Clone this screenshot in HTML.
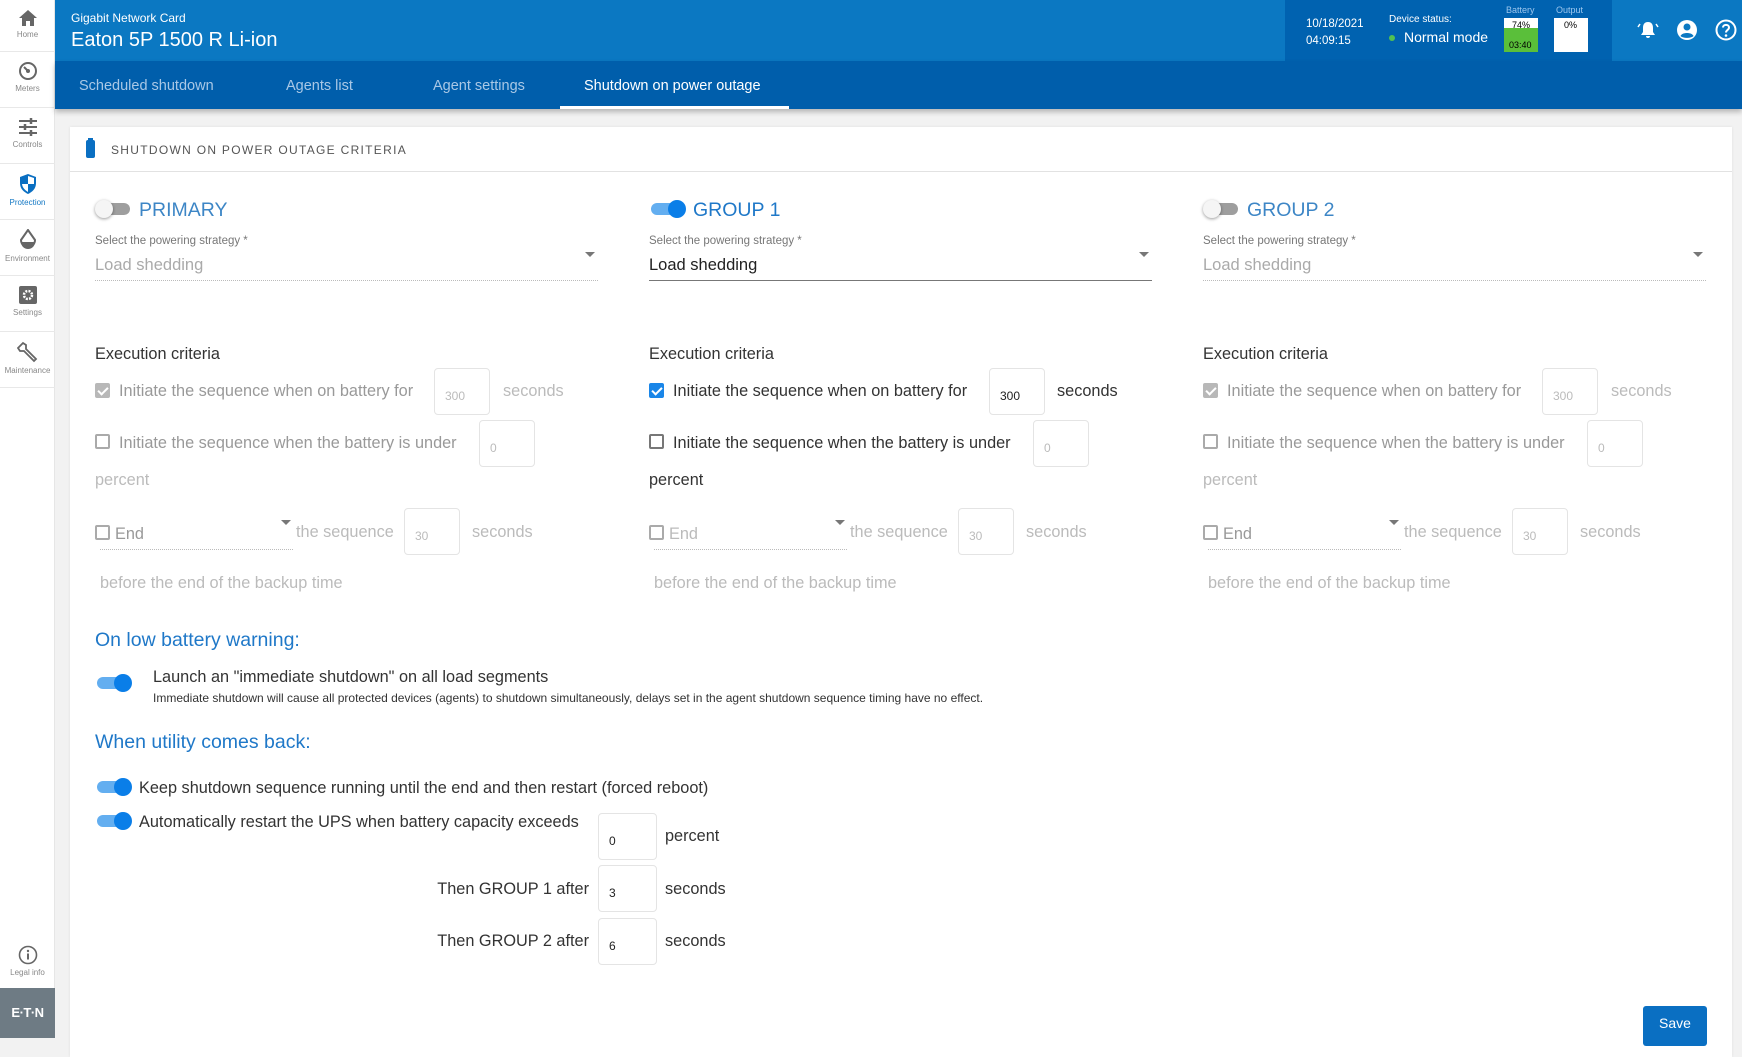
<!DOCTYPE html>
<html><head><meta charset="utf-8">
<style>
*{box-sizing:border-box;margin:0;padding:0}
body{width:1742px;height:1038px;overflow:hidden;background:#f2f2f2;font-family:"Liberation Sans",sans-serif;color:#333;position:relative}
.a{position:absolute;white-space:nowrap;margin-top:2px}
#side{position:absolute;left:0;top:0;width:55px;height:1038px;background:#fff;border-right:1px solid #e6e6e6}
.si{position:absolute;left:0;width:55px;height:56px;border-bottom:1px solid #e8e8e8;text-align:center;font-size:8px;color:#888}
.si svg{display:block;margin:9px auto 3px}
#hdr{position:absolute;left:55px;top:0;width:1687px;height:61px;background:#0b78c2}
#tabs{position:absolute;left:55px;top:61px;width:1687px;height:48px;background:#005eab;box-shadow:0 3px 5px rgba(0,0,0,.25)}
.tab{position:absolute;top:17px;font-size:14.5px;color:#a9c8e6}
#card{position:absolute;left:70px;top:127px;width:1662px;height:930px;background:#fff;box-shadow:0 0 3px rgba(0,0,0,.08)}
.col{position:absolute;top:0;width:510px;height:620px}
.tg{position:absolute;width:37px;height:18px}
.tg .tr{position:absolute;left:2px;top:3px;width:33px;height:12px;border-radius:6px;background:#9e9e9e}
.tg .kn{position:absolute;left:0;top:0;width:18px;height:18px;border-radius:50%;background:#f5f5f5;box-shadow:0 1px 3px rgba(0,0,0,.4)}
.tg.on .tr{background:#63aef0}
.tg.on .kn{left:19px;background:#0a7ee8;box-shadow:none}
.gt{font-size:19.5px;color:#1f78c8}
.dis .gt{color:#3d86c6}
.lbl{font-size:11.5px;color:#777}
.val{font-size:16.5px;color:#222}
.dis .val{color:#aaa}
.ul{position:absolute;height:0;border-bottom:1px solid #777}
.dis .ul{border-bottom:1px dotted #bbb}
.arr{position:absolute;width:0;height:0;border-left:5px solid transparent;border-right:5px solid transparent;border-top:5px solid #777}
.txt{font-size:16.3px;color:#333}
.dis .txt{color:#999}
.gray{color:#bbb!important}
.cb{position:absolute;width:15px;height:15px;border:2px solid #777;border-radius:2px;background:#fff}
.dis .cb{border-color:#aaa}
.cb.ck{background:#1a86e8;border-color:#1a86e8}
.dis .cb.ck{background:#b8b8b8;border-color:#b8b8b8}
.cb.ck::after{content:"";position:absolute;left:3px;top:0px;width:4px;height:8px;border-right:2px solid #fff;border-bottom:2px solid #fff;transform:rotate(45deg)}
.in{position:absolute;width:56px;height:47px;border:1px solid #e4e4e4;border-radius:4px;font-size:12px;color:#222;padding:20px 0 0 10px}
.dis .in{color:#bbb}
.h2{font-size:19.5px;color:#1f78c8}
.t16{font-size:16.3px;color:#333}
</style></head><body>

<div id="side">
 <div class="si" style="top:0;height:52px"><svg width="20" height="18" viewBox="0 0 20 18"><path d="M10 1 L1 9 H4 V17 H8 V12 H12 V17 H16 V9 H19 Z" fill="#666"/></svg>Home</div>
 <div class="si" style="top:52px"><svg width="20" height="20" viewBox="0 0 20 20"><circle cx="10" cy="10" r="8" fill="none" stroke="#666" stroke-width="2"/><path d="M10 10 L6 6" stroke="#666" stroke-width="2"/><circle cx="10" cy="10" r="2" fill="#666"/></svg>Meters</div>
 <div class="si" style="top:108px"><svg width="20" height="20" viewBox="0 0 20 20" stroke="#666" stroke-width="2"><path d="M1 4H19M1 10H19M1 16H19"/><path d="M13 1V7M7 7V13M13 13V19" stroke-width="2.5"/></svg>Controls</div>
 <div class="si" style="top:164px;color:#1478c4"><svg width="20" height="22" viewBox="0 0 20 22"><path d="M10 1 L18 4 V10 C18 16 14 19 10 21 C6 19 2 16 2 10 V4 Z" fill="#0a6fc2"/><path d="M10 3 V11 H16 V5 Z M4 11 H10 V19 C7 17 4.5 15 4 11Z" fill="#fff"/></svg>Protection</div>
 <div class="si" style="top:220px"><svg width="20" height="22" viewBox="0 0 20 22"><path d="M10 1 L3 11 A7 7 0 1 0 17 11 Z" fill="none" stroke="#666" stroke-width="2"/><path d="M3 13 A7 7 0 0 0 17 13Z" fill="#666"/></svg>Environment</div>
 <div class="si" style="top:276px"><svg width="20" height="20" viewBox="0 0 20 20"><rect x="1" y="1" width="18" height="18" rx="2" fill="#666"/><circle cx="10" cy="10" r="4" fill="none" stroke="#fff" stroke-width="2.5" stroke-dasharray="2 1.2"/></svg>Settings</div>
 <div class="si" style="top:332px"><svg width="22" height="22" viewBox="0 0 22 22"><path d="M3 5 L6 2 L9 4 L9 8 L19 18 L17 20 L7 10 L3 10 L1 7 Z" fill="none" stroke="#666" stroke-width="1.8"/></svg>Maintenance</div>
 <div class="si" style="top:936px;border:none;height:52px"><svg width="20" height="20" viewBox="0 0 20 20"><circle cx="10" cy="10" r="8.5" fill="none" stroke="#666" stroke-width="1.6"/><rect x="9" y="8.5" width="2" height="6" fill="#666"/><circle cx="10" cy="6" r="1.2" fill="#666"/></svg>Legal info</div>
 <div style="position:absolute;left:0;top:988px;width:55px;height:50px;background:#6e7b84;color:#fff;font-weight:bold;font-size:13px;text-align:center;line-height:50px;letter-spacing:-0.5px">E·T·N</div>
</div>

<div id="hdr">
 <div class="a" style="left:16px;top:9px;font-size:12px;color:#fff">Gigabit Network Card</div>
 <div class="a" style="left:16px;top:27px;font-size:20px;color:#fff">Eaton 5P 1500 R Li-ion</div>
 <div style="position:absolute;left:1230px;top:0;width:327px;height:61px;background:#0062b0"></div>
 <div class="a" style="left:1251px;top:14px;font-size:11.5px;color:#fff;line-height:17px">10/18/2021<br>04:09:15</div>
 <div class="a" style="left:1334px;top:12px;font-size:10px;color:#fff">Device status:</div>
 <div style="position:absolute;left:1334px;top:35px;width:6px;height:6px;border-radius:50%;background:#52c152"></div>
 <div class="a" style="left:1349px;top:27px;font-size:14px;color:#fff">Normal mode</div>
 <div class="a" style="left:1451px;top:3px;font-size:9px;color:#9cc6ee">Battery</div>
 <div style="position:absolute;left:1449px;top:18px;width:34px;height:34px;background:#fff"><div style="position:absolute;left:0;top:10px;width:34px;height:24px;background:#5abf3a"></div><div class="a" style="left:8px;top:0;font-size:9px;color:#000">74%</div><div class="a" style="left:5px;top:20px;font-size:9px;color:#000">03:40</div></div>
 <div class="a" style="left:1501px;top:3px;font-size:9px;color:#9cc6ee">Output</div>
 <div style="position:absolute;left:1499px;top:18px;width:34px;height:34px;background:#fff"><div class="a" style="left:10px;top:0;font-size:9px;color:#000">0%</div></div>
 <svg style="position:absolute;left:1582px;top:19px" width="22" height="22" viewBox="0 0 22 22"><path d="M11 3 C7 3 6 6 6 9 V13 L4 16 H18 L16 13 V9 C16 6 15 3 11 3Z M9 17 A2 2 0 0 0 13 17Z" fill="#fff"/><path d="M3 5 L1 8 M19 5 L21 8" stroke="#fff" stroke-width="1.5"/></svg>
 <svg style="position:absolute;left:1621px;top:19px" width="22" height="22" viewBox="0 0 22 22"><circle cx="11" cy="11" r="10" fill="#fff"/><circle cx="11" cy="8" r="3.5" fill="#0b78c2"/><path d="M4.5 17 C6 13 16 13 17.5 17 C15 19.5 7 19.5 4.5 17Z" fill="#0b78c2"/></svg>
 <svg style="position:absolute;left:1660px;top:19px" width="22" height="22" viewBox="0 0 22 22"><circle cx="11" cy="11" r="9.5" fill="none" stroke="#fff" stroke-width="2"/><path d="M8 8.5 C8 5 14 5 14 8.5 C14 11 11 11 11 13.5" fill="none" stroke="#fff" stroke-width="2"/><circle cx="11" cy="16.5" r="1.3" fill="#fff"/></svg>
</div>

<div id="tabs">
 <div class="tab" style="left:24px">Scheduled shutdown</div>
 <div class="tab" style="left:231px">Agents list</div>
 <div class="tab" style="left:378px">Agent settings</div>
 <div class="tab" style="left:529px;color:#fff">Shutdown on power outage</div>
 <div style="position:absolute;left:505px;top:45px;width:229px;height:3px;background:#fff"></div>
</div>

<div id="card">
 <div style="position:absolute;left:0;top:0;width:1662px;height:45px;border-bottom:1px solid #e2e2e2"></div>
 <div style="position:absolute;left:16px;top:13px;width:9px;height:18px;background:#0a6fc2;border-radius:2px"></div>
 <div style="position:absolute;left:18px;top:11px;width:5px;height:3px;background:#0a6fc2"></div>
 <div class="a" style="left:41px;top:14px;font-size:12px;letter-spacing:1.3px;color:#555">SHUTDOWN ON POWER OUTAGE CRITERIA</div>
</div>

<div class="col dis" style="left:95px;top:0">
 <div class="tg" style="left:0;top:200px"><div class="tr"></div><div class="kn"></div></div>
 <div class="a gt" style="left:44px;top:197px">PRIMARY</div>
 <div class="a lbl" style="left:0;top:233px">Select the powering strategy *</div>
 <div class="a val" style="left:0;top:254px">Load shedding</div>
 <div class="arr" style="left:490px;top:252px"></div>
 <div class="ul" style="left:0;top:280px;width:503px"></div>
 <div class="a t16" style="left:0;top:343px">Execution criteria</div>
 <div class="cb ck" style="left:0;top:383px"></div>
 <div class="a txt" style="left:24px;top:380px">Initiate the sequence when on battery for</div>
 <div class="in" style="left:339px;top:368px">300</div>
 <div class="a txt gray" style="left:408px;top:380px">seconds</div>
 <div class="cb" style="left:0;top:434px"></div>
 <div class="a txt" style="left:24px;top:432px">Initiate the sequence when the battery is under</div>
 <div class="in" style="left:384px;top:420px">0</div>
 <div class="a txt gray" style="left:0;top:469px">percent</div>
 <div class="cb" style="left:0;top:525px"></div>
 <div class="a txt" style="left:20px;top:523px">End</div>
 <div class="ul" style="left:5px;top:549px;width:193px"></div>
 <div class="arr" style="left:186px;top:520px"></div>
 <div class="a txt gray" style="left:201px;top:521px">the sequence</div>
 <div class="in" style="left:309px;top:508px">30</div>
 <div class="a txt gray" style="left:377px;top:521px">seconds</div>
 <div class="a txt gray" style="left:5px;top:572px">before the end of the backup time</div>
</div>

<div class="col" style="left:649px;top:0">
 <div class="tg on" style="left:0;top:200px"><div class="tr"></div><div class="kn"></div></div>
 <div class="a gt" style="left:44px;top:197px">GROUP 1</div>
 <div class="a lbl" style="left:0;top:233px">Select the powering strategy *</div>
 <div class="a val" style="left:0;top:254px">Load shedding</div>
 <div class="arr" style="left:490px;top:252px"></div>
 <div class="ul" style="left:0;top:280px;width:503px"></div>
 <div class="a t16" style="left:0;top:343px">Execution criteria</div>
 <div class="cb ck" style="left:0;top:383px"></div>
 <div class="a txt" style="left:24px;top:380px">Initiate the sequence when on battery for</div>
 <div class="in" style="left:340px;top:368px">300</div>
 <div class="a txt" style="left:408px;top:380px">seconds</div>
 <div class="cb" style="left:0;top:434px"></div>
 <div class="a txt" style="left:24px;top:432px">Initiate the sequence when the battery is under</div>
 <div class="in gray" style="left:384px;top:420px">0</div>
 <div class="a txt" style="left:0;top:469px">percent</div>
 <div class="cb" style="left:0;top:525px;border-color:#aaa"></div>
 <div class="a txt gray" style="left:20px;top:523px">End</div>
 <div class="ul" style="left:5px;top:549px;width:193px;border-bottom:1px dotted #bbb"></div>
 <div class="arr" style="left:186px;top:520px"></div>
 <div class="a txt gray" style="left:201px;top:521px">the sequence</div>
 <div class="in gray" style="left:309px;top:508px">30</div>
 <div class="a txt gray" style="left:377px;top:521px">seconds</div>
 <div class="a txt gray" style="left:5px;top:572px">before the end of the backup time</div>
</div>

<div class="col dis" style="left:1203px;top:0">
 <div class="tg" style="left:0;top:200px"><div class="tr"></div><div class="kn"></div></div>
 <div class="a gt" style="left:44px;top:197px">GROUP 2</div>
 <div class="a lbl" style="left:0;top:233px">Select the powering strategy *</div>
 <div class="a val" style="left:0;top:254px">Load shedding</div>
 <div class="arr" style="left:490px;top:252px"></div>
 <div class="ul" style="left:0;top:280px;width:503px"></div>
 <div class="a t16" style="left:0;top:343px">Execution criteria</div>
 <div class="cb ck" style="left:0;top:383px"></div>
 <div class="a txt" style="left:24px;top:380px">Initiate the sequence when on battery for</div>
 <div class="in" style="left:339px;top:368px">300</div>
 <div class="a txt gray" style="left:408px;top:380px">seconds</div>
 <div class="cb" style="left:0;top:434px"></div>
 <div class="a txt" style="left:24px;top:432px">Initiate the sequence when the battery is under</div>
 <div class="in" style="left:384px;top:420px">0</div>
 <div class="a txt gray" style="left:0;top:469px">percent</div>
 <div class="cb" style="left:0;top:525px"></div>
 <div class="a txt" style="left:20px;top:523px">End</div>
 <div class="ul" style="left:5px;top:549px;width:193px"></div>
 <div class="arr" style="left:186px;top:520px"></div>
 <div class="a txt gray" style="left:201px;top:521px">the sequence</div>
 <div class="in" style="left:309px;top:508px">30</div>
 <div class="a txt gray" style="left:377px;top:521px">seconds</div>
 <div class="a txt gray" style="left:5px;top:572px">before the end of the backup time</div>
</div>

<div class="a h2" style="left:95px;top:627px">On low battery warning:</div>
<div class="tg on" style="left:95px;top:674px"><div class="tr"></div><div class="kn"></div></div>
<div class="a t16" style="left:153px;top:666px">Launch an "immediate shutdown" on all load segments</div>
<div class="a" style="left:153px;top:689px;font-size:12px;color:#333">Immediate shutdown will cause all protected devices (agents) to shutdown simultaneously, delays set in the agent shutdown sequence timing have no effect.</div>

<div class="a h2" style="left:95px;top:729px">When utility comes back:</div>
<div class="tg on" style="left:95px;top:778px"><div class="tr"></div><div class="kn"></div></div>
<div class="a t16" style="left:139px;top:777px">Keep shutdown sequence running until the end and then restart (forced reboot)</div>
<div class="tg on" style="left:95px;top:812px"><div class="tr"></div><div class="kn"></div></div>
<div class="a t16" style="left:139px;top:811px">Automatically restart the UPS when battery capacity exceeds</div>
<div class="in" style="left:598px;top:813px;width:59px">0</div>
<div class="a t16" style="left:665px;top:825px">percent</div>
<div class="a t16" style="left:389px;top:878px;width:200px;text-align:right">Then GROUP 1 after</div>
<div class="in" style="left:598px;top:865px;width:59px">3</div>
<div class="a t16" style="left:665px;top:878px">seconds</div>
<div class="a t16" style="left:389px;top:930px;width:200px;text-align:right">Then GROUP 2 after</div>
<div class="in" style="left:598px;top:918px;width:59px">6</div>
<div class="a t16" style="left:665px;top:930px">seconds</div>

<div style="position:absolute;left:1643px;top:1006px;width:64px;height:40px;background:#0a6fc2;border-radius:3px;color:#fff;font-size:14px;text-align:center;padding-top:9px">Save</div>
</body></html>
